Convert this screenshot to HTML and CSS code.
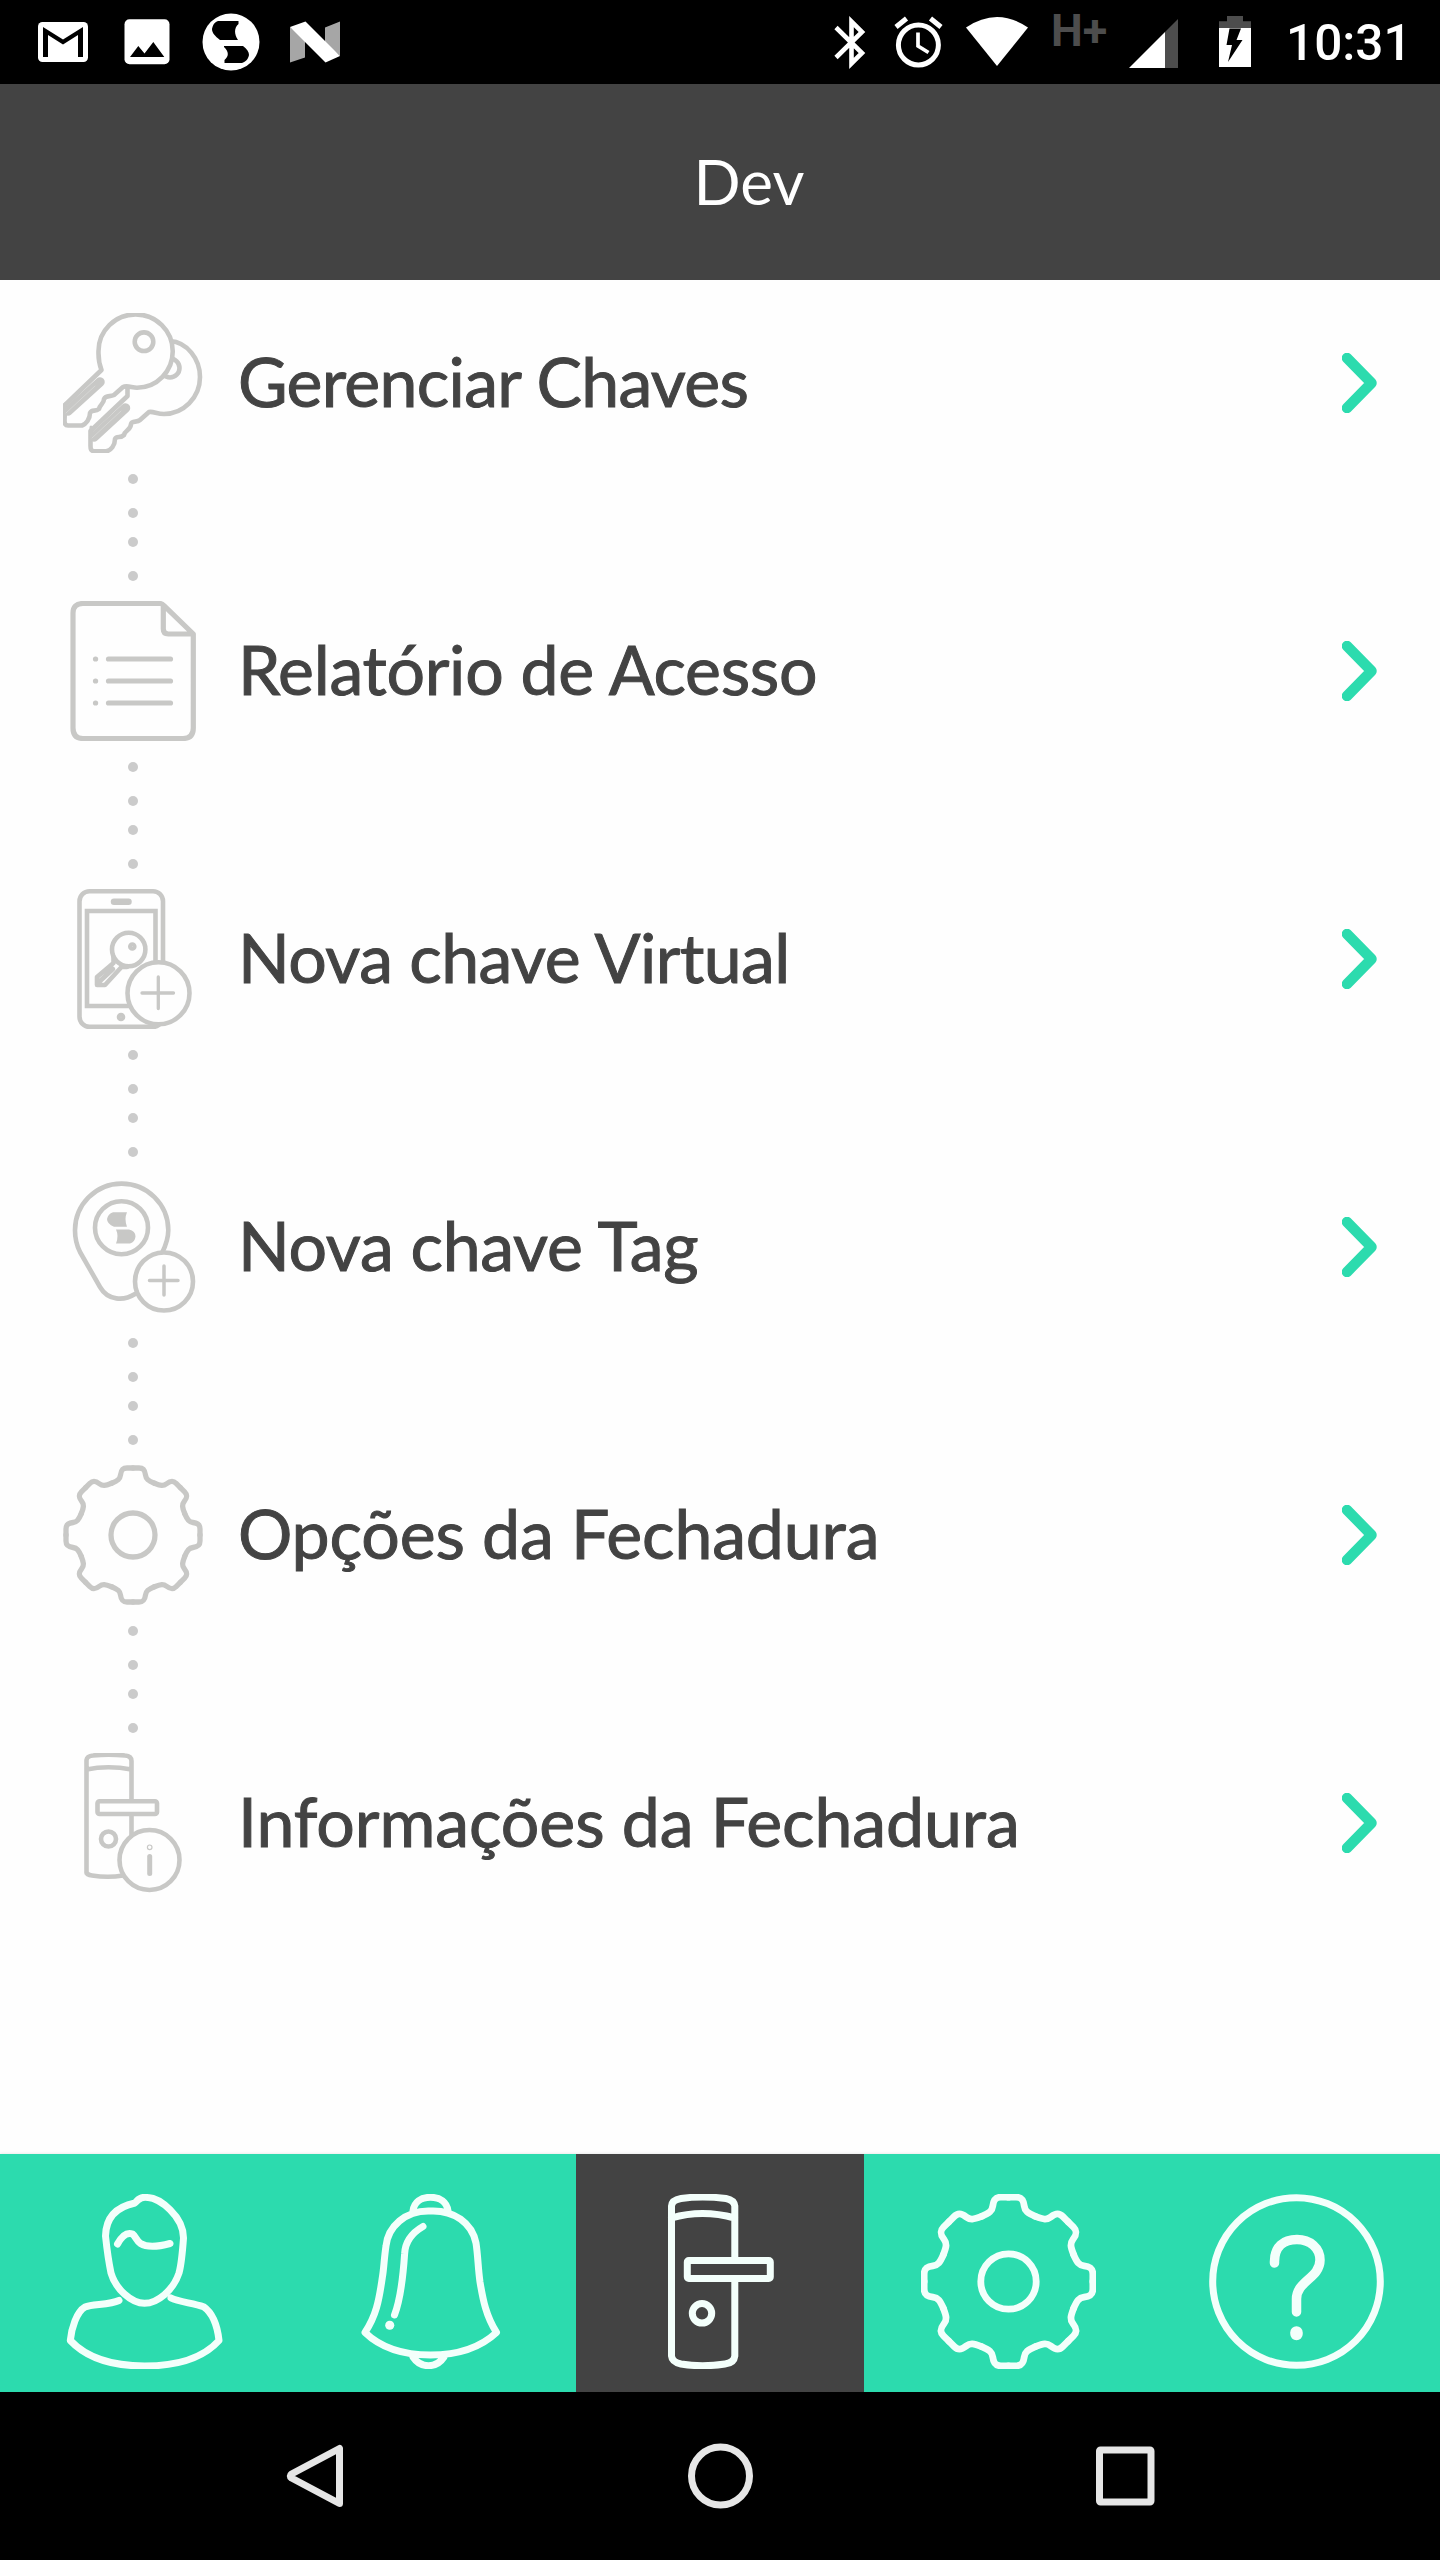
FILE: index.html
```html
<!DOCTYPE html>
<html lang="pt-BR">
<head>
<meta charset="utf-8">
<title>Dev</title>
<link rel="stylesheet" href="styles.css">
</head>
<body>
<svg class="defs" width="0" height="0" aria-hidden="true">
  <defs>
    <path id="half" d="M0-67H6C11-67 12-64 12.5-60C13-56 15-54.5 21.4-51.7"/>
    <g id="tooth"><use href="#half"/><use href="#half" transform="scale(-1 1)"/></g>
    <g id="cog">
      <use href="#tooth"/><use href="#tooth" transform="rotate(45)"/><use href="#tooth" transform="rotate(90)"/><use href="#tooth" transform="rotate(135)"/>
      <use href="#tooth" transform="rotate(180)"/><use href="#tooth" transform="rotate(225)"/><use href="#tooth" transform="rotate(270)"/><use href="#tooth" transform="rotate(315)"/>
      <circle r="22"/>
    </g>
  </defs>
</svg>
<div class="screen">
  <div class="status">
    <svg width="53" height="84" viewBox="38 0 53 84"><rect x="38" y="22" width="50" height="40" rx="4.500" fill="#fff"/><path d="M43 57V27L63 39.500 83 27V57H78V35L63 44.500 48 35V57Z" fill="#000"/></svg>
    <svg width="51" height="84" viewBox="121 0 51 84"><rect x="124.500" y="19.300" width="45" height="45" rx="5" fill="#fff"/><path d="M130 57L138.300 46 144.500 53.500 153.300 42 164.300 57Z" fill="#000"/></svg>
    <svg width="58" height="84" viewBox="202 0 58 84"><circle cx="231" cy="42" r="28.500" fill="#fff"/><path d="M218 21H238.500V24C234 28 234 34 238 40H220C215 36 212 33 212 29C213 24 215 22 218 21ZM224 46H243C247 49 249 52 249 55C248 60 245 62 242 63H224.500V60C229 56 229 52 224 47Z" fill="#000"/></svg>
    <svg width="50" height="84" viewBox="290 0 50 84"><path d="M290 27L305 38V57.500L290 62.500ZM325 27.500L340 21.500V56L325 43Z" fill="#a6a6a6"/><path d="M290 27L305.500 21.500 340 56 325.500 62.500Z" fill="#fff"/></svg>
    <div class="system">
      <svg width="40" height="84" viewBox="832 0 40 84"><path d="M836 27.500L862 53 851.500 63.500V21.500L862 32 836 57.500" fill="none" stroke="#fff" stroke-width="4.600"/></svg>
      <svg width="54" height="84" viewBox="892 0 54 84"><g fill="none" stroke="#fff"><circle cx="918.400" cy="45" r="20" stroke-width="5"/><path d="M896 27L906.500 18.500M930.500 18.500L941 27" stroke-width="5"/><path d="M918 32.500V46L928.500 52.500" stroke-width="3.700"/></g></svg>
      <svg width="64" height="84" viewBox="966 0 64 84"><path d="M966 27.500Q997 6.500 1028 27.500L997 66Z" fill="#fff"/></svg>
      <span class="network">H+</span>
      <svg width="57" height="84" viewBox="1129 0 57 84"><path d="M1178 19V68H1165V32Z" fill="#4d4d4d"/><path d="M1165 32V68H1129Z" fill="#fff"/></svg>
      <svg width="60" height="84" viewBox="1206 0 60 84"><path d="M1219 28V21.300H1227V16H1243V21.300H1251V28Z" fill="#4d4d4d"/><path d="M1219 28H1251V67H1219Z" fill="#fff"/><path d="M1229.500 28.500H1241L1236.500 40H1242.500L1228 62 1232 45H1226.500Z" fill="#000"/></svg>
      <span class="time">10:31</span>
    </div>
  </div>
  <header class="header"><h1 class="title">Dev</h1></header>
  <main class="menu">
    <a class="item">
      <svg class="icon" viewBox="0 0 140 140">
        <path d="M107 28C124 29 137 46 137 64C137 85 120 101 101 101C94 101 90 98 86 99L77 107C74 110 69 107 68 111C68 117 62 117 61 122C57 126 54 122 52 126C52 132 48 138 43 138.200H31C28 138 27.500 136 27.500 133V118L64.500 83V74"/>
        <circle cx="107" cy="55" r="9.500"/>
        <path d="M62.500 95L31 124" stroke-width="9.500"/><path d="M28 114V127" stroke-width="3"/><path d="M58 98L29 125" stroke="#d6d6d4" stroke-width="1"/>
        <path class="solid" d="M2 92L38.500 57C35 48 35.500 43 35.500 38A37 36.500 0 0 1 109.700 38C110 58 94 74.700 74 74.700C69 74.700 64 72 60 74L51 82C47 84 43 82 41 86C41 91 37 91 36 96C32 99 29 96 27 100C27 106 23 111 19 112.500H5C2 112.500 1.500 110 1.500 108Z"/>
        <circle cx="81" cy="28.700" r="9.300"/>
        <path d="M37 69L5 98" stroke-width="9.500"/><path d="M2 91V103" stroke-width="3"/><path d="M32 73L3 100" stroke="#d6d6d4" stroke-width="1"/>
      </svg>
      <span class="label l1">Gerenciar Chaves</span>
      <svg class="chevron" viewBox="0 0 35 60"><path d="M5 5L29.500 30 5 55"/></svg>
      <span class="dots"><i></i><i></i><i></i><i></i></span>
    </a>
    <a class="item">
      <svg class="icon" viewBox="0 0 140 140"><path stroke-width="5.200" d="M97 2.500H20Q10 2.500 10 12V127Q10 137.500 20 137.500H120Q130.300 137.500 130.300 127V33L101 4.700Q99 2.500 97 2.500ZM100.300 5V28Q100.300 33 105.300 33H129M45.500 58H107.500M45.500 80H107.500M45.500 102H107.500M32.500 58H32.600M32.500 80H32.600M32.500 102H32.600"/></svg>
      <span class="label l2">Relatório de Acesso</span>
      <svg class="chevron" viewBox="0 0 35 60"><path d="M5 5L29.500 30 5 55"/></svg>
      <span class="dots"><i></i><i></i><i></i><i></i></span>
    </a>
    <a class="item">
      <svg class="icon" viewBox="0 0 140 140"><rect x="16.500" y="2.300" width="83.500" height="135.400" rx="10"/><path d="M51 12.700H65.500" stroke-width="6.500"/><path d="M24 22H92.500V117H24Z" stroke-linejoin="miter"/><circle cx="58" cy="128" r="2" />
        <circle cx="65.700" cy="60.500" r="16.700"/><circle cx="69.300" cy="57.500" r="2"/><path d="M50.500 68V74L34 88V96H42L58.500 78H64M50 80L36 93"/>
        <circle class="solid" cx="95.500" cy="104.300" r="31"/><path d="M79 104H110.500M95.300 88V119.500" stroke-width="3.300"/></svg>
      <span class="label l3">Nova chave Virtual</span>
      <svg class="chevron" viewBox="0 0 35 60"><path d="M5 5L29.500 30 5 55"/></svg>
      <span class="dots"><i></i><i></i><i></i><i></i></span>
    </a>
    <a class="item">
      <svg class="icon" viewBox="0 0 140 140"><path d="M72 117C61 124 45 124 37 110L17 75C13 67 12 60 12 53.500A46.500 46.500 0 0 1 105.300 53C105.300 61 103 68 99 76"/><circle cx="58.500" cy="50.700" r="26.500"/><path stroke="none" fill="#c8c8c6" d="M50 35.300H64Q61 42 64 49.700H51Q44 47 44 42Q45 37 50 35.300ZM53 52.500H66Q72.500 54 72.500 59.500Q72 65 67 66.500H53Q56 59 53 52.500Z"/><circle class="solid" cx="101" cy="104.500" r="29"/><path d="M86.500 103.500H115M101 89V118" stroke-width="3.500"/></svg>
      <span class="label l4">Nova chave Tag</span>
      <svg class="chevron" viewBox="0 0 35 60"><path d="M5 5L29.500 30 5 55"/></svg>
      <span class="dots"><i></i><i></i><i></i><i></i></span>
    </a>
    <a class="item">
      <svg class="icon" viewBox="-70 -70 140 140"><use href="#cog" stroke-width="5.300"/></svg>
      <span class="label l5">Opções da Fechadura</span>
      <svg class="chevron" viewBox="0 0 35 60"><path d="M5 5L29.500 30 5 55"/></svg>
      <span class="dots"><i></i><i></i><i></i><i></i></span>
    </a>
    <a class="item">
      <svg class="icon" viewBox="0 0 140 140"><path d="M23.500 120V7Q24 3 30 2.500Q45 .8 62 2.500Q68.500 3 68.500 8V46M68.500 62V85M23.500 16.500Q45 12 68.500 16.500M23.500 119Q24 122 29 122.500Q45 125 60 122.500"/><rect x="34.500" y="48.300" width="59.500" height="12.700" rx="2"/><circle cx="45.500" cy="86" r="7.500"/><circle class="solid" cx="86.500" cy="107" r="30"/><path d="M86.700 103.500V120.500" stroke-width="5"/><circle cx="86.700" cy="94.300" r=".6" /></svg>
      <span class="label l6">Informações da Fechadura</span>
      <svg class="chevron" viewBox="0 0 35 60"><path d="M5 5L29.500 30 5 55"/></svg>
    </a>
  </main>
  <nav class="tabs">
    <a class="tab"><svg viewBox="0.500 0 175 175"><path d="M78.500 9C83 3 87 3 91.500 3.500C103 4 127 22 127 44C126 58 125 70 122.500 79C117 96 101 109.300 88 109.300C75 109.300 59 95 54.500 79C52 67 50.500 56 49 42C49.500 20 64 12 78.500 9ZM61 50Q68 37 76 40C79 42 80 47 84 49.500Q93 55 113.500 49.500M62.500 106.500C53 111 36 110 28.500 113C20 118 15 134 13.800 146.500C33 167 61 172 88 172S144 167 162.500 146.500C161 133 156 119 147 112.700C137 109 122 108 114.500 104"/></svg></a>
    <a class="tab"><svg viewBox="1 0 175 175"><path d="M69 17C70 8 77 3.300 86.500 3.300S103 8 104 17M86.500 17C61 16 44 33 42 52C40 65 40 74 38.400 83C35 107 32 122 21 138.500C37 154 61 161 86.500 161S136 154 152.500 138.500C142 122 139 106 136 88C134 74 134 62 132 49C128 29 110 16 86.500 17ZM79 32.500C66 40 61 50 60.600 60C59 84 57 104 50.500 121M69 163C73 169 79 171.700 84.500 171.700S96 169 100 163"/><path d="M45.700 131.200H45.800" stroke-width="9"/></svg></a>
    <a class="tab active"><svg viewBox="0 0 175 175"><path d="M101.800 65V12Q101 6 93 4.500Q69 1.500 48 4.500Q39 6 38.500 12V162Q39 168 48 170Q69 173.500 92 170Q101 169 101.800 162V87M38.500 24Q69 15 101.800 24"/><rect x="54.300" y="66.500" width="83" height="18" rx="1.500"/><circle cx="69" cy="119.300" r="9.700"/></svg></a>
    <a class="tab"><svg viewBox="-69.500 -69.500 139 139"><use href="#cog" stroke-width="5.400"/></svg></a>
    <a class="tab"><svg viewBox="0 0 175 175"><circle cx="87.500" cy="87.500" r="83.800"/><path d="M65.500 69C65 52 75 45.500 88 45.500S111 54 111 66C111 84 87.500 87 87.500 105V118" stroke-width="9.500"/><path d="M87.500 138.500V140" stroke-width="12.500"/></svg></a>
  </nav>
  <div class="navbar">
    <svg viewBox="-3 0 66 66"><path d="M54.500 5.500V60.500L6.500 35Q4 33 6.500 31Z"/></svg>
    <svg viewBox="0 0 66 66"><circle cx="33.500" cy="33" r="29"/></svg>
    <svg viewBox="0 0 66 66"><rect x="7.500" y="7" width="51.500" height="52" rx="1"/></svg>
  </div>
</div>
</body>
</html>
```
FILE: styles.css
```css
* { box-sizing: border-box; }
body { margin: 0; background: #fff; font-family: Lato, "Open Sans", sans-serif; }
.defs { display: block; height: 0; }
.screen { width: 1440px; height: 2560px; display: flex; flex-direction: column; overflow: hidden; background: #fefefe; }
.status { height: 84px; flex: none; display: flex; gap: 30px; padding-left: 38px; background: #000; }
.status svg { flex: none; }
.system { display: flex; gap: 20px; margin-left: auto; font-family: Roboto, sans-serif; }
.network { width: 59px; padding-left: 1px; color: #4d4d4d; font-size: 45px; line-height: 62px; font-weight: 700; white-space: nowrap; }
.time { width: 154px; color: #fff; font-size: 49.5px; line-height: 87px; font-weight: 500; white-space: nowrap; }
.header { height: 196px; flex: none; display: flex; align-items: center; justify-content: center; padding: 0 0 2px 58px; background: #434343; }
.title { margin: 0; color: #fff; font-size: 62px; line-height: 80px; font-weight: 400; }
.menu { flex: 1; padding: 33px 63px 0; }
.item { height: 288px; display: grid; grid-template-columns: 140px 1fr 35px; grid-template-rows: 140px 148px; column-gap: 35px; align-items: center; }
.icon { width: 140px; height: 140px; fill: none; stroke: #c8c8c6; stroke-width: 4.6; stroke-linecap: round; stroke-linejoin: round; }
.solid { fill: #fefefe; }
.label { padding-bottom: 4px; color: #434343; font-size: 68px; line-height: 80px; white-space: nowrap; -webkit-text-stroke: 1px #434343; }
.l1 { letter-spacing: -0.72px; }
.l2 { letter-spacing: -0.3px; }
.l3 { letter-spacing: -0.55px; }
.l4 { letter-spacing: -0.3px; }
.l5 { letter-spacing: -0.14px; }
.l6 { letter-spacing: -0.09px; }
.chevron { width: 35px; height: 60px; fill: none; stroke: #2cdbae; stroke-width: 10.5; stroke-linecap: round; stroke-linejoin: round; }
.dots { grid-row: 2; align-self: start; justify-self: center; display: grid; grid-template-rows: 34px 29px 34px 10px; padding-top: 21px; }
.dots i { width: 10px; height: 10px; border-radius: 50%; background: #cbcbcb; }
.tabs { height: 238px; flex: none; display: grid; grid-template-columns: repeat(5, 288px); background: #2cdbae; box-shadow: 0 0 3px rgba(0, 0, 0, 0.12); }
.tab { display: flex; justify-content: center; padding-top: 40px; }
.tab svg { width: 175px; height: 175px; fill: none; stroke: #f3fffb; stroke-width: 7; stroke-linecap: round; stroke-linejoin: round; }
.active { background: #434343; }
.navbar { height: 168px; flex: none; display: grid; grid-template-columns: repeat(3, 405px); justify-content: center; justify-items: center; align-items: center; background: #000; }
.navbar svg { width: 66px; height: 66px; fill: none; stroke: #e6e6e6; stroke-width: 7; stroke-linejoin: round; }
```
